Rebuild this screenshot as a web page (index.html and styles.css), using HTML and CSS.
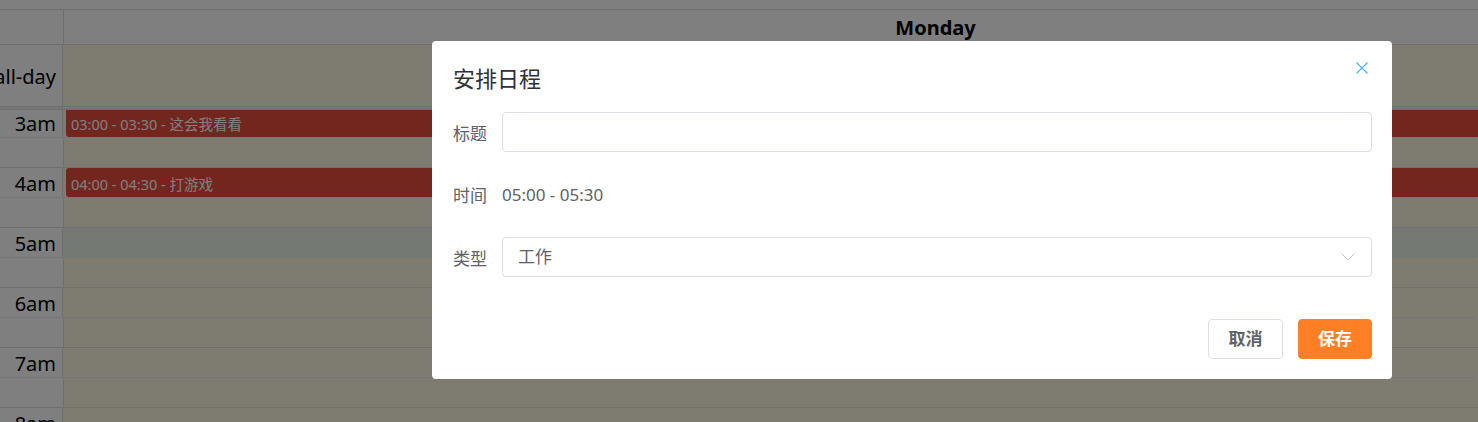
FILE: index.html
```html
<!DOCTYPE html>
<html lang="zh-CN">
<head>
<meta charset="utf-8">
<title>安排日程</title>
<link rel="stylesheet" href="styles.css">
</head>
<body>
<div class="cal">
  <div class="cal-toolbar"></div>
  <div class="cal-head">
    <div class="axis"></div>
    <div class="day-head">Monday</div>
  </div>
  <div class="cal-allday">
    <div class="axis axis-label"><span>all-day</span></div>
    <div class="day-cell"></div>
  </div>
  <div class="cal-divider"></div>
  <div class="cal-slots">
    <div class="slots-inner">
      <div class="slot hour"><div class="axis axis-label"><span>3am</span></div><div class="day-cell"></div></div>
      <div class="slot half"><div class="axis"></div><div class="day-cell"></div></div>
      <div class="slot hour"><div class="axis axis-label"><span>4am</span></div><div class="day-cell"></div></div>
      <div class="slot half"><div class="axis"></div><div class="day-cell"></div></div>
      <div class="slot hour"><div class="axis axis-label"><span>5am</span></div><div class="day-cell sel"></div></div>
      <div class="slot half"><div class="axis"></div><div class="day-cell"></div></div>
      <div class="slot hour"><div class="axis axis-label"><span>6am</span></div><div class="day-cell"></div></div>
      <div class="slot half"><div class="axis"></div><div class="day-cell"></div></div>
      <div class="slot hour"><div class="axis axis-label"><span>7am</span></div><div class="day-cell"></div></div>
      <div class="slot half"><div class="axis"></div><div class="day-cell"></div></div>
      <div class="slot hour"><div class="axis axis-label"><span>8am</span></div><div class="day-cell"></div></div>
      <div class="slot half"><div class="axis"></div><div class="day-cell"></div></div>
      <div class="event ev1">03:00 - 03:30 - 这会我看看</div>
      <div class="event ev2">04:00 - 04:30 - 打游戏</div>
    </div>
  </div>
</div>

<div class="overlay"></div>

<div class="modal">
  <div class="modal-header">
    <div class="modal-title">安排日程</div>
    <svg class="modal-close" width="12" height="12" viewBox="0 0 12 12">
      <path d="M0.5 0.5 L11.5 11.5 M11.5 0.5 L0.5 11.5" stroke="#55b4e8" stroke-width="1.3" fill="none"/>
    </svg>
  </div>
  <div class="form">
    <div class="form-item">
      <div class="form-label">标题</div>
      <div class="input"></div>
    </div>
    <div class="form-item">
      <div class="form-label">时间</div>
      <div class="form-text">05:00 - 05:30</div>
    </div>
    <div class="form-item last">
      <div class="form-label">类型</div>
      <div class="input select">
        <span class="select-value">工作</span>
        <svg class="select-arrow" width="14" height="8" viewBox="0 0 14 8">
          <path d="M0.5 0.5 L7 7 L13.5 0.5" stroke="#c0c4cc" stroke-width="1" fill="none"/>
        </svg>
      </div>
    </div>
  </div>
  <div class="modal-footer">
    <div class="btn btn-default">取消</div>
    <div class="btn btn-primary">保存</div>
  </div>
</div>
</body>
</html>
```

FILE: styles.css
```css
html, body {
  margin: 0;
  padding: 0;
  overflow: hidden;
  background: #fff;
}

body {
  font-family: "Noto Sans", "Noto Sans CJK SC", sans-serif;
  width: 1478px;
  height: 422px;
  position: relative;
}

.cal {
  width: 1807px;
}

.cal-toolbar {
  height: 9px;
}

.axis {
  width: 63px;
  flex: none;
  border-right: 1px solid #ddd;
  box-sizing: content-box;
}

.axis-label {
  display: flex;
  justify-content: flex-end;
  font-size: 20px;
  color: #000;
  white-space: nowrap;
  box-sizing: border-box;
  padding-right: 6px;
}

.cal-head {
  display: flex;
  height: 34px;
  border-top: 1px solid #ddd;
  border-bottom: 1px solid #ddd;
}

.day-head {
  flex: 1;
  text-align: center;
  font-weight: 700;
  font-size: 20px;
  line-height: 36px;
  color: #000;
}

.cal-allday {
  display: flex;
  height: 61px;
}

.cal-allday .axis-label {
  line-height: 64px;
}

.day-cell {
  flex: 1;
  background: #fcf8e3;
}

.cal-divider {
  height: 2px;
  background: #eee;
  border-top: 1px solid #ddd;
  border-bottom: 1px solid #ddd;
}

.cal-slots {
  height: 320px;
  overflow: hidden;
}

.slots-inner {
  position: relative;
  margin-top: -2px;
}

.slot {
  display: flex;
  height: 30px;
  box-sizing: border-box;
}

.slot.hour {
  border-bottom: 1px dotted #ddd;
}

.slot.half {
  border-bottom: 1px solid #ddd;
}

.slot .axis-label {
  line-height: 32px;
}

.day-cell.sel {
  background-image: linear-gradient(rgba(188, 232, 241, 0.3), rgba(188, 232, 241, 0.3));
}

.event {
  position: absolute;
  left: 66px;
  right: 2px;
  height: 29px;
  background: #e74c3c;
  border-radius: 3px;
  color: #fff;
  font-size: 14.5px;
  line-height: 22px;
  padding: 5px 0 0 5px;
  box-sizing: border-box;
  white-space: nowrap;
}

.ev1 { top: 0; }
.ev2 { top: 60px; }

.overlay {
  position: absolute;
  inset: 0;
  background: rgba(0, 0, 0, 0.5);
}

.modal {
  position: absolute;
  left: 432px;
  top: 41px;
  width: 960px;
  box-sizing: border-box;
  background: #fff;
  border-radius: 4px;
  padding: 22px 20px 20px 21px;
}

.modal-header {
  height: 30px;
}

.modal-title {
  font-size: 22px;
  line-height: 30px;
  color: #303133;
}

.modal-close {
  position: absolute;
  right: 24px;
  top: 21px;
}

.form {
  margin-top: 19px;
}

.form-item {
  display: flex;
  align-items: center;
  height: 40px;
  margin-bottom: 22.5px;
}

.form-item.last {
  margin-bottom: 0;
}

.form-label {
  width: 49px;
  flex: none;
  font-size: 17px;
  color: #606266;
}

.form-text {
  font-size: 17px;
  color: #606266;
}

.input {
  flex: 1;
  height: 40px;
  box-sizing: border-box;
  border: 1px solid #dcdfe6;
  border-radius: 4px;
}

.select {
  display: flex;
  align-items: center;
  justify-content: space-between;
  padding: 0 15px;
}

.select-value {
  font-size: 17px;
  line-height: 36px;
  color: #606266;
}

.select-arrow {
  display: block;
  margin-right: 1px;
}

.modal-footer {
  display: flex;
  justify-content: flex-end;
  gap: 15px;
  margin-top: 42px;
}

.btn {
  height: 40px;
  box-sizing: border-box;
  border-radius: 4px;
  font-size: 17px;
  font-weight: 600;
  line-height: 38px;
  text-align: center;
}

.btn-default {
  width: 75px;
  border: 1px solid #dcdfe6;
  color: #606266;
  background: #fff;
}

.btn-primary {
  width: 74px;
  border: 1px solid #ff7f24;
  color: #fff;
  background: #ff7f24;
}
```
